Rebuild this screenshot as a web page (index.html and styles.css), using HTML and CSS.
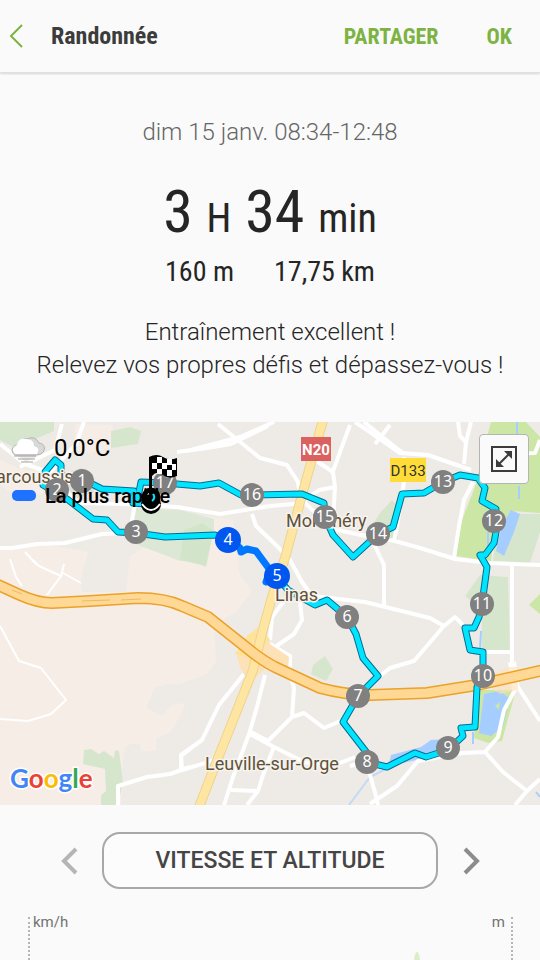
FILE: index.html
```
<!DOCTYPE html>
<html lang="fr">
    <head>
        <meta charset="utf-8">
        <meta name="viewport" content="width=device-width, initial-scale=1">
        <title>Randonnée</title>
        <link rel="stylesheet" href="styles.css">
    </head>

    <body>
        <header class="topbar">
            <button class="back" aria-label="Retour">
                <svg width="14" height="26" viewBox="0 0 14 26"><path d="M13 2 L2 13 L13 24"/></svg>
            </button>
            <h1>Randonnée</h1>
            <button class="action">PARTAGER</button>
            <button class="action">OK</button>
        </header>

        <main>
            <section class="summary">
                <p class="date">dim 15 janv. 08:34-12:48</p>
                <p class="duration">3 <small>H</small> 34 <small>min</small></p>
                <p class="stats"><span>160 m</span><span>17,75 km</span></p>
                <p class="message">Entraînement excellent !<br>Relevez vos propres défis et dépassez-vous !</p>
            </section>

            <section class="map">
                <svg class="map-canvas" viewBox="0 0 540 383">
                    <rect width="540" height="383" fill="#eeebe7"/>

                    <!-- built-up areas -->
                    <g fill="#f6ede6">
                        <path d="M0 126 L40 121 L88 130 L128 136 L180 102 L187 92 L233 98 L239 150 L252 170 L236 190 L214 202 L216 240 L207 252 L180 262 L184 285 L174 310 L156 318 L156 329 L141 329 L140 322 L125 325 L121 383 L0 383 Z"/>
                        <path d="M76 2 L112 3 L118 24 L90 31 L73 28 Z"/>
                        <path d="M20 47 L50 50 L42 72 L8 69 L0 62 V38 Z"/>
                    </g>
                    <g fill="#eeebe7">
                        <path d="M88 130 L130 136 L126 170 L82 170 L80 160 Z"/>
                        <path d="M155 266 L168 262 L190 262 V350 L122 360 L123 332 L130 322 L140 322 L141 329 L156 329 L157 316 L170 310 L185 287 L184 281 L171 283 L162 294 L146 286 Z"/>
                    </g>

                    <!-- woods and parks -->
                    <g fill="#d6e6cd">
                        <path d="M0 0 H54 V9 L26 21 L19 28 L0 18 Z"/>
                        <path d="M111 9 L130 5 L141 9 L138 22 L111 26 Z"/>
                        <path d="M56 62 L67 51 L81 46 L92 52 L94 70 L78 76 Z" fill="#dadfd9"/>
                        <path d="M134 86 L180 88 L214 97 V108 L206 145 L190 138 L180 139 L154 129 L130 120 Z" fill="#dce8d5"/>
                        <path d="M184 108 L202 101 L213 108 L206 144 L180 138 Z" fill="#d2e5cb"/>
                        <path d="M84 328 L91 327 L99 332 L104 329 L114 336 L115 328 L119 329 L123 360 L118 383 H101 V373 L106 369 L105 347 L83 342 Z"/>
                        <path d="M313 243 L325 234 L333 247 L326 259 L311 252 Z"/>
                        <path d="M372 104 L380 91 L392 78 L399 85 L396 108 L399 121 L380 118 Z"/>
                        <path d="M540 110 L540 92 L515 92 L495 119 L493 141 H530 Z"/>
                        <path d="M480 153 L508 155 L510 228 L482 228 L482 188 L465 174 Z"/>
                    </g>
                    <g fill="#cce7a5">
                        <path d="M491 0 H526 L540 15 V91 L511 89 L493 118 L491 139 L456 134 L462 98 L476 62 L481 38 Z"/>
                        <path d="M477 268 L516 268 L502 319 L488 321 L474 316 Z"/>
                        <path d="M529 183 L540 172 V192 Z"/>
                    </g>

                    <!-- water -->
                    <g fill="#a5cdff">
                        <path d="M496 129 L502 103 L511 88 L520 92 L514 110 L504 134 Z"/>
                        <path d="M484 272 L500 269 L509 276 L503 305 L491 314 L479 311 Z"/>
                        <path d="M389 342 L391 333 L421 325 L431 318 L448 317 L434 334 L403 341 Z"/>
                    </g>
                    <g fill="none" stroke="#a5cdff" stroke-width="2">
                        <path d="M517 0 V15 M519 64 V77 M488 110 V134 M481 209 L480 227 M473 310 V322 M536 370 L540 375"/>
                        <path d="M390 345 L370 355 L349 383" opacity=".6"/>
                    </g>
                    <path d="M495 284 L500 280 L499 288 Z" fill="#cce7a5"/>

                    <!-- local roads -->
                    <g fill="none" stroke="#ffffff" stroke-linejoin="round">
                        <g stroke-width="4">
                            <path d="M0 22 L25 42 L48 50 L78 81 L125 82 L177 85 L220 92 L270 84 L305 81 L333 107 L375 116 L395 119 L420 126 L455 137 L489 141 L540 143"/>
                            <path d="M20 45 L55 28 L62 2 M47 54 L76 22 L84 0"/>
                            <path d="M218 2 L260 36 L287 43 L298 60 L301 80 M177 30 L207 26 L231 22 L268 4 M187 29 L240 15 L274 0"/>
                            <path d="M303 80 L319 68 L335 65 L333 50 L315 38 M332 52 L340 30 L350 3 M364 0 L395 25 L403 31 M335 65 L333 100 M355 0 L367 8"/>
                            <path d="M367 8 L400 31 L428 33 L471 48 M375 22 L390 3 M458 0 L460 14 L466 20 L464 42 M466 20 L471 0 M404 35 L404 60 L397 104 L394 119"/>
                            <path d="M473 60 L464 78 L459 104 L454 136 M500 32 L535 31 L540 18 M0 126 L12 126 L37 122 L65 121 L102 112 L126 111 M135 82 L130 110"/>
                            <path d="M252 92 L256 104 L277 124 L290 138 L302 160 L312 174 L330 176 L365 180 L430 196 L444 204 L455 195 L463 203"/>
                            <path d="M443 205 L414 239 L390 246 L375 258 M372 118 L384 143 L384 186 M300 180 L302 198 L294 212 L275 225 M288 174 L272 195 L270 218"/>
                            <path d="M270 222 L290 234 L290 250 L294 266 L292 295 L304 291 L324 306 L343 298 M292 295 L268 319 L251 310"/>
                            <path d="M265 253 L257 285 L249 312 L233 355 L224 383 M244 252 L219 283 L202 318 L181 333 L182 348 L215 338"/>
                            <path d="M250 312 L274 325 L304 340 L330 345 L355 335 M274 325 L263 353 L258 369 L231 368 M258 369 L247 383"/>
                            <path d="M512 142 L512 240 L515 268 L504 288 L498 315 L485 330 L462 331 L418 339 L397 364 L370 382 M512 230 H484 M485 330 L503 350 L527 369 L540 357 M527 369 L515 383"/>
                            <path d="M518 265 L540 299 M368 346 L376 374 L378 383 M367 340 L350 344"/>
                            <path d="M118 383 V364 L147 355 L170 352 L190 345 M181 350 V334 L190 327"/>
                        </g>
                        <g stroke-width="2">
                            <path d="M0 204 L19 239 L41 246 L66 278 L51 292 L28 299 L0 297"/>
                            <path d="M10 137 L16 155 L22 164 M33 138 L39 144 L61 154 L64 142 M61 154 L47 173 M63 151 L81 161 M25 130 L37 143"/>
                        </g>
                        <path d="M512 240 L516 268" stroke-width="8"/>
                    </g>

                    <!-- main roads -->
                    <path d="M480 258 L508 245 L518 245 L518 268 L500 272 Z" fill="#fee0b5" opacity=".6"/>
                    <path d="M247 215 L256 206 L263 205 L270 222 L289 235 L288 247 L265 247 L249 261 L240 245 L236 231 Z" fill="#fde1b7"/>
                    <path d="M247 214 Q256 203 270 217 L264 224 L252 219 L247 235 L235 232 Z" fill="#fee39a"/>
                    <g fill="none" stroke-linejoin="round">
                        <path d="M323 -2 L302 73 L285 136 L272 175 L262 211 L253 248 L220 331 L199 385" stroke="#efd38b" stroke-width="10"/>
                        <path d="M323 -2 L302 73 L285 136 L272 175 L262 211 L253 248 L220 331 L199 385" stroke="#fee6a2" stroke-width="8"/>
                        <path d="M-4 162 L20 173 Q38 181 52 181 L90 179 L138 176 Q165 176 182 184 L208 195 L247 226 Q264 240 277 246 L320 266 Q346 273 370 273 L427 271 L477 263 L544 248" stroke="#eba228" stroke-width="12"/>
                        <path d="M-4 162 L20 173 Q38 181 52 181 L90 179 L138 176 Q165 176 182 184 L208 195 L247 226 Q264 240 277 246 L320 266 Q346 273 370 273 L427 271 L477 263 L544 248" stroke="#ffd896" stroke-width="9"/>
                        <path d="M12 168 L22 172 M82 179 L110 178 M121 178 L141 177" stroke="#f0b95f"/>
                    </g>

                    <rect x="301" y="15" width="30" height="24" fill="#db6060"/>
                    <text class="road road-red" x="316" y="33">N20</text>
                    <rect x="390" y="36" width="36" height="24" fill="#ffdc37"/>
                    <text class="road" x="408" y="54">D133</text>

                    <!-- track -->
                    <g fill="none" stroke-linejoin="round">
                        <g stroke="#086a91" stroke-width="7">
                            <path d="M151 76 L145 82 L133 81 L134 69 L102 67 L92 62 L82 59 L61 53 L61 43 L55 38 L45 50 L43 63 L57 71 L67 77 L93 97 L107 98 L118 110 L136 111 L165 115 L215 113 L228 118"/>
                            <path d="M277 155 L288 168 L315 183 L327 178 L347 195 L356 212 L363 236 L378 254 L358 274 L343 300 L367 331 L367 340 L387 345 L415 331 L426 335 L448 328 L463 314 L461 306 L475 305 L477 265 L483 254 L483 230 L470 228 L465 206 L474 206 L479 195 L482 182 L487 145 L480 133 L485 133 L494 121 L496 110 L494 99 L496 87 L482 79 L485 66 L478 56 L460 53 L443 60 L424 71 L402 72 L393 105 L378 112 L353 135 L333 113 L325 95 L324 81 L302 72 L252 73 L241 73 L219 61 L200 64 L165 61 L141 60 L137 80"/>
                        </g>
                        <g stroke="#00e5ff" stroke-width="5">
                            <path d="M151 76 L145 82 L133 81 L134 69 L102 67 L92 62 L82 59 L61 53 L61 43 L55 38 L45 50 L43 63 L57 71 L67 77 L93 97 L107 98 L118 110 L136 111 L165 115 L215 113 L228 118"/>
                            <path d="M277 155 L288 168 L315 183 L327 178 L347 195 L356 212 L363 236 L378 254 L358 274 L343 300 L367 331 L367 340 L387 345 L415 331 L426 335 L448 328 L463 314 L461 306 L475 305 L477 265 L483 254 L483 230 L470 228 L465 206 L474 206 L479 195 L482 182 L487 145 L480 133 L485 133 L494 121 L496 110 L494 99 L496 87 L482 79 L485 66 L478 56 L460 53 L443 60 L424 71 L402 72 L393 105 L378 112 L353 135 L333 113 L325 95 L324 81 L302 72 L252 73 L241 73 L219 61 L200 64 L165 61 L141 60 L137 80"/>
                        </g>
                        <path d="M228 118 L240 126 L241 130 L247 127 L256 129 L270 148 L266 160 L277 157" stroke="#0077ff" stroke-width="7"/>
                    </g>

                    <g class="place">
                        <text x="-4" y="61">arcoussis</text>
                        <text x="286" y="105">Montlhéry</text>
                        <text x="275" y="179">Linas</text>
                        <text x="205" y="348">Leuville-sur-Orge</text>
                    </g>

                    <!-- kilometre marks -->
                    <g class="km">
                        <circle cx="165" cy="61" r="12"/><text x="165" y="66">17</text>
                        <circle cx="252" cy="73" r="12"/><text x="252" y="78">16</text>
                        <circle cx="325" cy="95" r="12"/><text x="325" y="100">15</text>
                        <circle cx="378" cy="112" r="12"/><text x="378" y="117">14</text>
                        <circle cx="443" cy="60" r="12"/><text x="443" y="65">13</text>
                        <circle cx="494" cy="99" r="12"/><text x="494" y="104">12</text>
                        <circle cx="482" cy="182" r="12"/><text x="482" y="187">11</text>
                        <circle cx="483" cy="254" r="12"/><text x="483" y="259">10</text>
                        <circle cx="448" cy="326" r="12"/><text x="448" y="331">9</text>
                        <circle cx="367" cy="340" r="12"/><text x="367" y="345">8</text>
                        <circle cx="358" cy="274" r="12"/><text x="358" y="279">7</text>
                        <circle cx="347" cy="195" r="12"/><text x="347" y="200">6</text>
                        <circle class="fast" cx="277" cy="154" r="13"/><text x="277" y="159">5</text>
                        <circle class="fast" cx="228" cy="118" r="13"/><text x="228" y="123">4</text>
                        <circle cx="136" cy="110" r="12"/><text x="136" y="115">3</text>
                        <circle cx="57" cy="68" r="12"/><text x="57" y="73">2</text>
                        <circle cx="82" cy="59" r="12"/><text x="82" y="64">1</text>
                    </g>

                    <!-- weather -->
                    <g>
                        <path d="M19 33 Q12 34 12 28 Q13 23 18 23 Q21 15 27 17 Q35 13 39 21 Q46 22 44 29 Q42 33 36 33 Z" fill="#d8d8d8" stroke="#b5b5b5"/>
                        <path d="M15 32 Q10 26 17 23 Q19 15 26 17 Q34 17 34 24 Q41 26 37 32 Z" fill="#fff"/>
                        <path d="M14 34 H36 M18 37 H35 M21 40 H33" stroke="#a0a0a0"/>
                    </g>
                    <text class="temp" x="54" y="34">0,0°C</text>
                    <rect x="12" y="68" width="24" height="11" rx="5" fill="#1f72ff"/>
                    <text class="legend" x="45" y="81">La plus rapide</text>

                    <!-- start and finish -->
                    <circle cx="151" cy="82" r="10" fill="#000"/>
                    <path d="M142 82 Q151 94 160 82" fill="none" stroke="#fff" stroke-width="2"/>
                    <circle cx="151" cy="75" r="7" fill="none" stroke="#000" stroke-width="5"/>
                    <path d="M149 35 Q157 31 163 35 T177 36 V54 Q169 58 163 53 T152 54 V72 H149 Z" fill="#000"/>
                    <path d="M157 35 h5 v6 h-5z M167 37 h5 v6 h-5z M152 41 h5 v6 h-5z M162 41 h5 v6 h-5z M172 42 h4 v6 h-4z M157 47 h5 v5 h-5z M167 48 h5 v6 h-5z" fill="#fff"/>
                    <path d="M153 72 Q156 76 152 79" fill="none" stroke="#00e5ff" stroke-width="2"/>

                    <text class="google" x="10" y="366"><tspan fill="#4285f4">G</tspan><tspan fill="#ea4335">o</tspan><tspan fill="#fbbc05">o</tspan><tspan fill="#4285f4">g</tspan><tspan fill="#34a853">l</tspan><tspan fill="#ea4335">e</tspan></text>
                </svg>

                <button class="expand" aria-label="Agrandir la carte">
                    <svg width="26" height="26" viewBox="0 0 26 26">
                        <rect x="1" y="1" width="24" height="24"/>
                        <path d="M7 19 L19 7"/>
                        <path class="tip" d="M13 5 H21 V13 Z M5 13 V21 H13 Z"/>
                    </svg>
                </button>
            </section>

            <nav class="chart-nav">
                <button class="arrow" aria-label="Graphique précédent" disabled>
                    <svg width="18" height="28" viewBox="0 0 18 28"><path d="M16 2 L4 14 L16 26"/></svg>
                </button>
                <button class="chart-type">VITESSE ET ALTITUDE</button>
                <button class="arrow" aria-label="Graphique suivant">
                    <svg width="18" height="28" viewBox="0 0 18 28"><path d="M3 2 L15 14 L3 26"/></svg>
                </button>
            </nav>

            <section class="chart">
                <span>km/h</span>
                <svg class="peak" width="6" height="8" viewBox="0 0 6 8"><path d="M0 8 Q1 0 3 0 Q5 0 6 8 Z"/></svg>
                <span>m</span>
            </section>
        </main>
    </body>
</html>
```
FILE: styles.css
```
* {
    box-sizing: border-box;
}

body {
    margin: 0;
    height: 100vh;
    display: flex;
    flex-direction: column;
    overflow: hidden;
    background-color: #fafafa;
    color: #252525;
    font-family: Roboto, "Noto Sans", sans-serif;
}

h1, p {
    margin: 0;
}

button {
    border: none;
    padding: 0;
    background: none;
    font-family: inherit;
    cursor: pointer;
}

svg {
    display: block;
}

main {
    flex: 1;
    display: flex;
    flex-direction: column;
}

.topbar {
    display: flex;
    align-items: center;
    height: 73px;
    padding: 0 28px 0 9px;
    border-bottom: 1px solid #e0e0e0;
    box-shadow: 0 1px 2px rgba(0, 0, 0, .15);
}

.topbar, .duration, .stats {
    font-family: "Roboto Condensed", "Liberation Sans Narrow", Roboto, sans-serif;
}

.back {
    padding-right: 28px;
}

.back path {
    fill: none;
    stroke: #7cb342;
    stroke-width: 2;
}

.topbar h1 {
    flex: 1;
    color: #3c3c3c;
    font-size: 24px;
    font-weight: 700;
}

.action {
    margin-left: 48px;
    color: #7cb342;
    font-size: 22px;
    font-weight: 700;
}

.summary {
    padding: 43px 0 40px;
    text-align: center;
}

.date {
    color: #666;
    font-size: 24px;
    font-weight: 300;
    line-height: 32px;
}

.duration {
    padding-top: 24px;
    font-size: 60px;
    line-height: 80px;
}

.duration small {
    font-size: 40px;
    line-height: 40px;
}

.stats {
    display: flex;
    justify-content: center;
    gap: 40px;
    font-size: 28px;
    line-height: 40px;
}

.message {
    padding-top: 24px;
    font-size: 24px;
    font-weight: 300;
    line-height: 33px;
}

.map {
    position: relative;
}

.map-canvas {
    width: 100%;
}

.road {
    fill: #333;
    font-size: 15px;
    text-anchor: middle;
}

.road-red {
    fill: #fff;
    font-weight: 700;
}

.place {
    fill: #5f5139;
    stroke: #f6f3ee;
    stroke-width: 3px;
    paint-order: stroke;
    font-size: 18px;
}

.km {
    fill: #808080;
    font-family: "Noto Sans", Roboto, sans-serif;
    font-size: 16px;
    text-anchor: middle;
}

.km text {
    fill: #fff;
}

.km .fast {
    fill: #0057f0;
}

.temp {
    font-size: 24px;
}

.legend {
    font-size: 20px;
    font-weight: 500;
}

.google {
    font-family: Lato, Roboto, sans-serif;
    font-size: 26px;
    font-weight: 700;
    stroke: #fff;
    stroke-width: 3px;
    paint-order: stroke;
}

.expand {
    position: absolute;
    top: 12px;
    right: 11px;
    display: flex;
    align-items: center;
    justify-content: center;
    width: 50px;
    height: 50px;
    border: 1px solid #b5b5b5;
    border-radius: 4px;
    background-color: #fafafa;
}

.expand svg {
    fill: none;
    stroke: #3c3c3c;
    stroke-width: 2;
}

.expand .tip {
    fill: #3c3c3c;
    stroke: none;
}

.chart-nav {
    display: flex;
    align-items: center;
    gap: 24px;
    padding: 27px 60px 0;
}

.arrow path {
    fill: none;
    stroke: #8c8c8c;
    stroke-width: 4;
}

.arrow:disabled path {
    stroke: #b5b5b5;
}

.chart-type {
    flex: 1;
    height: 57px;
    border: 2px solid #a8a8a8;
    border-radius: 18px;
    background-color: #fcfcfc;
    color: #454545;
    font-size: 23px;
    font-weight: 500;
}

.chart {
    flex: 1;
    display: flex;
    justify-content: space-between;
    margin: 28px 27px 0 28px;
    padding: 0 6px 0 3px;
    border: dotted #b5b5b5;
    border-width: 0 2px;
    color: #727272;
    font-size: 15px;
    line-height: 10px;
}

.peak {
    align-self: flex-end;
    margin-left: auto;
    margin-right: 72px;
    fill: #dcedc8;
}
```
